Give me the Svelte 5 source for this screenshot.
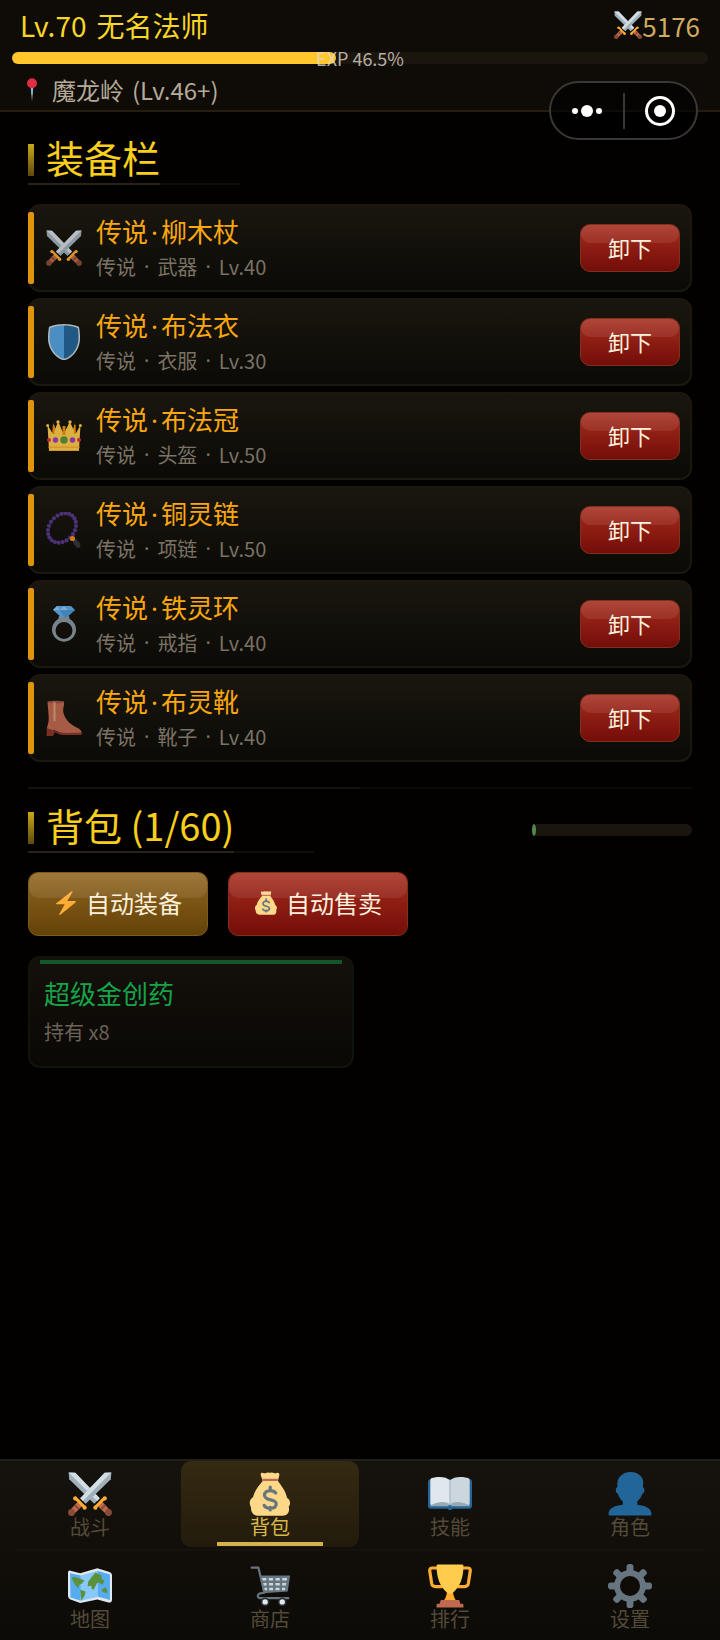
<script>
  const player = { level: 70, name: "无名法师", power: 5176, exp: 46.5 };
  const zone = { name: "魔龙岭", level: 46 };
  const bag = { used: 1, size: 60 };

  let equipment = $state([
    { icon: "swords", name: "柳木杖", slot: "武器", level: 40 },
    { icon: "shield", name: "布法衣", slot: "衣服", level: 30 },
    { icon: "crown", name: "布法冠", slot: "头盔", level: 50 },
    { icon: "beads", name: "铜灵链", slot: "项链", level: 50 },
    { icon: "ring", name: "铁灵环", slot: "戒指", level: 40 },
    { icon: "boot", name: "布灵靴", slot: "靴子", level: 40 },
  ]);

  const items = [{ name: "超级金创药", count: 8 }];

  const tabRows = [
    [
      { icon: "swords", label: "战斗" },
      { icon: "moneybag", label: "背包" },
      { icon: "book", label: "技能" },
      { icon: "person", label: "角色" },
    ],
    [
      { icon: "map", label: "地图" },
      { icon: "cart", label: "商店" },
      { icon: "trophy", label: "排行" },
      { icon: "gear", label: "设置" },
    ],
  ];

  let activeTab = $state("背包");

  const beads = Array.from({ length: 22 }, (_, i) => {
    const a = (i / 22) * Math.PI * 2;
    const x = Math.cos(a) * 16;
    const y = Math.sin(a) * 12.5;
    // tilt the oval towards the tassel
    return { x: 16 + x * 0.64 + y * 0.77, y: 16 - x * 0.77 + y * 0.64 };
  });

  function unequip(item) {
    equipment = equipment.filter((e) => e !== item);
  }
</script>

{#snippet sword()}
  <path fill="#9fb0bb" d="M35.500 .5 30 .7 10 21.500 14.500 26 35 6z" />
  <path fill="#d3dde4" d="M35.500 .5 30 .7 10 21.500 12.200 23.700z" />
  <path fill="#be6a4a" d="m8.300 24 3.700 3.700-6.500 6-3.200-3.200z" />
  <path fill="#8a4b38" d="m6 26.300 3.500 3.500-1.200 1.200-3.500-3.500z" />
  <circle fill="#8a4b38" cx="2.900" cy="33.100" r="2.800" />
  <path
    fill="none"
    stroke="#ffac33"
    stroke-width="2.400"
    stroke-linecap="round"
    d="M6 21.700c1 .3 2 1.300 3.400 2.900s2.800 3 4 4"
  />
  <circle fill="#ffac33" cx="5.900" cy="21.600" r="1.700" />
  <circle fill="#ffac33" cx="13.600" cy="29.200" r="1.700" />
{/snippet}

{#snippet icon(name)}
  <svg class="icon" viewBox="0 0 36 36" aria-hidden="true">
    {#if name === "swords"}
      <g transform="matrix(-1 0 0 1 36 0)">{@render sword()}</g>
      {@render sword()}
    {:else if name === "shield"}
      <path fill="#ccd6dd" d="M33 3s-5-3-15-3S3 3 3 3s-1 5-1 11c0 14 11 22 16 22s16-8 16-22c0-6-1-11-1-11z" />
      <path fill="#269" d="M18 1.500c8.500 0 13.700 2.600 13.700 2.600s.8 4.800.8 9.900c0 12.500-9.700 20.500-14.500 20.500z" />
      <path fill="#55a4e4" d="M18 1.500C9.500 1.500 4.300 4.100 4.300 4.100S3.500 8.900 3.500 14c0 12.500 9.700 20.500 14.500 20.500z" />
    {:else if name === "crown"}
      <path fill="#f4900c" d="m6 19 1-14 5 12 1-12 5 13 5-13 2 12 4-12 1 14z" />
      <path fill="#ffcc4d" d="M3 32 1.500 7 7 16l5-12 5.500 12L24 4l5.500 12L34.500 7 33 32z" />
      <path fill="#f4900c" d="M7 7h1.500v9H7zM16.500 8h3v9h-3zM28 7h1.500v9H28z" />
      <path fill="#ffac33" d="M2.500 28.500h31v1.500h-31zM3 32h30v1H3z" />
      <circle fill="#5c913b" cx="18" cy="22" r="3.700" />
      <circle fill="#9a3fc4" cx="9.500" cy="22" r="2.700" />
      <circle fill="#9a3fc4" cx="26.500" cy="22" r="2.700" />
      <circle fill="#dd2e44" cx="3" cy="22" r="2" />
      <circle fill="#dd2e44" cx="33" cy="22" r="2" />
      <g fill="#ffcc4d">
        <circle cx="1.700" cy="7.500" r="1.500" />
        <circle cx="12" cy="4" r="1.700" />
        <circle cx="24" cy="4" r="1.700" />
        <circle cx="34.300" cy="7.500" r="1.500" />
      </g>
    {:else if name === "beads"}
      {#each beads as bead}
        <circle fill="#553788" cx={bead.x} cy={bead.y} r="2.100" />
      {/each}
      <path fill="#31373d" d="m27 28 3.500-1 4 5-.5 3.500-3 .5-4-5z" />
      <circle fill="#f4900c" cx="26.500" cy="26.500" r="2.600" />
    {:else if name === "ring"}
      <path
        fill="#8899a6"
        fill-rule="evenodd"
        d="M13 10h10l.7 3.100A12 12 0 1 1 12.300 13.100zM18 16a8.500 8.500 0 1 0 0 17 8.500 8.500 0 0 0 0-17z"
      />
      <path fill="#5dadec" d="M11 0h14l4 4-8 7h-6L7 4z" />
      <path fill="#8ccaf7" d="m11 0-4 4h7zM18 0l-4 4h8z" />
      <path fill="#4a98d6" d="m14 4 4 7h3l1-7zM22 4h7l-8 7z" />
    {:else if name === "boot"}
      <path fill="#c1694f" d="M1.500 2c0-1 16-1 16.500 0 .5 3-1.500 7-.5 11 1.500 6 6 11 13 14.500 3.500 1.500 5.500 3 5 6l-18 .5L8 30l-7 1c-.7-3 .7-5 1.500-9 .8-5-.7-14-1-20z" />
      <path fill="#a0513f" d="M2 2.500c3 1 12.500 1 16 0V1.500c-4-1-13-1-16 0z" />
      <path fill="#d99e82" d="M7.500 2h2v19h-2z" />
      <path fill="#8a352c" d="M1 28c3 2 6.500 1.500 10 3.500 4 2 12 1.500 24.500 1v2.500H17c-3 0-5-1-8-3L7 36H.5z" />
    {:else if name === "zap"}
      <path fill="#ffac33" d="M32.900 15.600A1 1 0 0 0 32 15H19.900L27.800 1.600A1 1 0 0 0 26.500.2l-23 18A1 1 0 0 0 4.100 20h12L8.200 34.300a1 1 0 0 0 1.400 1.400l23-19a1 1 0 0 0 .3-1.100z" />
    {:else if name === "moneybag"}
      <path
        fill="#fdd888"
        d="M31.900 21.100C30.900 15.500 27 11 24.500 7.400L25.600 2.600C25.900 1 24.700.1 23.300.8 22 1.500 20.500 0 19.300.4 18.300.8 17.600.8 16.500.4 15.200 0 14 1.500 12.600.8 11 .1 10 1.200 10.500 2.700L12 7.400C9 11 5.200 15.500 4.200 20.500 1 22.500.7 26 2.500 29 2.200 32.500 4.500 36 8.500 35.700H28c4 .2 6.500-3 5.300-7 2-3 1.200-6-1.400-7.600z"
      />
      <path fill="#bf6952" d="M11.500 5.600h13.200L24.300 7.400H12.100z" />
      <path
        fill="none"
        stroke="#67757f"
        stroke-width="2.600"
        stroke-linecap="round"
        d="M18.200 12.300v3M18.200 29v2M22.700 17.200c-1-1.400-2.700-2-4.500-2-2.700 0-4.700 1.500-4.700 3.800 0 5 9.600 2.700 9.600 7 0 2.400-2 3.800-4.900 3.800-2.200 0-4-.9-5-2.500"
      />
    {:else if name === "book"}
      <path fill="#269" d="M0 8q0-2 2-2h32q2 0 2 2v20q0 2-2 2H20q0 1-2 1t-2-1H2q-2 0-2-2z" />
      <path fill="#99aab5" d="M2 6.500h32V28H20l-2 1-2-1H2z" />
      <path fill="#e1e8ed" d="M3 5c5-1.500 12-1.500 15 2v19.500C14 23.500 8 24.500 3.500 26.500 2.500 27 2 26.500 2 25.500V6z" />
      <path fill="#ccd6dd" d="M33 5c-5-1.500-12-1.500-15 2v19.500c4-3 10-2 14.500 0 1 .5 1.500 0 1.500-1V6z" />
      <path fill="#aab8c2" d="M17.500 6.500h1V27h-1z" />
      <circle fill="#226699" cx="18" cy="28.500" r="1.600" />
    {:else if name === "person"}
      <path
        fill="#269"
        d="M24 26.800v-2.700c1.900-1.600 3.400-4 4.200-6.500 1 0 1.600-1.200 1.600-2.600s-.5-2.500-1.300-2.700C30.500 5 25.500 0 18.500 0S6.500 5 7.800 12.300C6.900 12.500 6.400 13.600 6.400 15s.7 2.600 1.600 2.600c.8 2.500 2.200 4.900 4.100 6.500v2.700C5 27.500.5 30 .5 34v1q0 .5 1 .5h33q1 0 1-.5v-1c0-4-4.500-6.500-11.500-7.200z"
      />
    {:else if name === "map"}
      <path fill="#e1e8ed" d="M0 7q0-2 2-1.500l8 2 14-4 10 3q2 .6 2 2.500v20q0 3-3 2.500l-9-2.500-14 3-8-3q-2-.7-2-3z" />
      <path fill="#55acee" d="m1.700 7.500 8.800 2V30L2 27.500zM24 5.500l10.300 3v21L24 26.500z" />
      <path fill="#88c9f9" d="m10.500 9.500 13.500-4v21.500L10.500 30z" />
      <path
        fill="#5c913b"
        d="M3 11.500 5 10.500l5 1.500 3.500 1.500-2 2.500-2.500 1-.5 3-3-3.500zM10 21l4.500 1.500-1 3.500-2.500 4-.5-4.500zM16 18.500l.5-4 3-4 3-3.500 5 2.500v2.500l2.500 2-2 3-3-2-1.500 1-2.500 5-1.500-.5-.5-3zM27.500 21l3-2 1.500 2v3l-3.500-1z"
      />
    {:else if name === "cart"}
      <path
        fill="none"
        stroke="#66757f"
        stroke-width="1.800"
        stroke-linejoin="round"
        stroke-linecap="round"
        d="M3 3h5.500l5 20.500-3.500.5c-2.700 1-2.700 4 .5 4h22.500"
      />
      <path fill="#66757f" d="M9.500 9.500h25L32.500 22.500 12.500 24z" />
      <g fill="#ccd6dd">
        <path d="M11.500 11.500h3.500v2h-3zM17 11.500h3.500v2H17zM22.500 11.500H26v2h-3.500zM28 11.500h4l-.4 2H28z" />
        <path d="M12.500 15.500h2.700v2h-2.300zM17.200 15.500h3.300v2h-3.300zM22.500 15.500H26v2h-3.500zM28 15.500h3.300l-.4 2H28z" />
        <path d="M13.300 19.500h2.300v2h-1.800zM17.400 19.500h3.100v2h-3.100zM22.500 19.500h3.300v2h-3.300zM27.800 19.500h2.700l-.4 2h-2.300z" />
      </g>
      <circle fill="#292f33" cx="14" cy="31" r="3.500" />
      <circle fill="#292f33" cx="28" cy="31" r="3.500" />
      <circle fill="#e1e8ed" cx="14" cy="31" r="2.200" />
      <circle fill="#e1e8ed" cx="28" cy="31" r="2.200" />
    {:else if name === "trophy"}
      <path
        fill="none"
        stroke="#ffac33"
        stroke-width="2.600"
        d="M9 3.300H3.500Q1.300 3.300 1.400 5.500L3 16q.5 2.500 3 2.500h6M27 3.300h5.500q2.200 0 2.100 2.200L33 16q-.5 2.500-3 2.500h-6"
      />
      <path fill="#ffac33" d="M15.500 22h5c0 4 1.500 6 2.500 8H13c1-2 2.500-4 2.500-8z" />
      <path fill="#ffcc4d" d="M7 1.500Q7 .5 8.500.5h19q1.500 0 1.500 1c0 10-3 17-8 21.500-2 1.800-4 1.800-6 0C10 18.500 7 11.500 7 1.500z" />
      <path fill="#c1694f" d="M10.500 29.500h15l1 3H28q1 0 1 1v2H7v-2q0-1 1-1h1.500z" />
    {:else if name === "gear"}
      <g fill="#66757f">
        {#each [0, 45, 90, 135] as angle}
          <rect x="15.200" y="0" width="5.600" height="36" rx="2.300" transform="rotate({angle} 18 18)" />
        {/each}
        <circle cx="18" cy="18" r="13" />
      </g>
      <circle class="gear-hole" cx="18" cy="18" r="8.200" />
    {:else if name === "pin"}
      <path fill="#99aab5" d="m16 12 2 24 2-24z" />
      <path fill="#88c9f9" fill-opacity=".5" d="m16 12 1 14h2l1-14z" />
      <circle fill="#dd2e44" cx="18" cy="8" r="7.500" />
    {/if}
  </svg>
{/snippet}

<div class="page">
  <header>
    <div class="player">
      <div class="player-name"><span>Lv.{player.level}</span><span>{player.name}</span></div>
      <span class="power">{@render icon("swords")}{player.power}</span>
    </div>
    <div class="bar exp">
      <div class="fill" style="width: {player.exp}%"></div>
      <span class="exp-text">EXP {player.exp}%</span>
    </div>
    <div class="zone">
      {@render icon("pin")}
      <span>{zone.name}</span>
      <span>(Lv.{zone.level}+)</span>
    </div>
  </header>

  <div class="capsule">
    <button aria-label="更多">
      <svg width="32" height="12" viewBox="0 0 32 12" fill="#fff">
        <circle cx="4" cy="6" r="3" />
        <circle cx="16" cy="6" r="6" />
        <circle cx="28" cy="6" r="3" />
      </svg>
    </button>
    <span class="capsule-line"></span>
    <button aria-label="关闭">
      <svg width="32" height="32" viewBox="0 0 32 32">
        <circle cx="16" cy="16" r="13.500" fill="none" stroke="#fff" stroke-width="3" />
        <circle cx="16" cy="16" r="6" fill="#fff" />
      </svg>
    </button>
  </div>

  <main>
    <h2><span class="title">装备栏</span></h2>

    <ul class="equipment">
      {#each equipment as item (item.slot)}
        <li class="equip">
          {@render icon(item.icon)}
          <div class="info">
            <div class="equip-name">传说<span class="dot">·</span>{item.name}</div>
            <div class="meta">
              <span>传说</span>
              <span class="dot">·</span>
              <span>{item.slot}</span>
              <span class="dot">·</span>
              <span>Lv.{item.level}</span>
            </div>
          </div>
          <button class="btn red small" onclick={() => unequip(item)}>卸下</button>
        </li>
      {/each}
    </ul>

    <div class="divider"></div>

    <div class="bag-head">
      <h2><span class="title">背包 ({bag.used}/{bag.size})</span></h2>
      <div class="bar capacity">
        <div class="fill" style="width: {(bag.used / bag.size) * 100}%"></div>
      </div>
    </div>

    <div class="actions">
      <button class="btn gold">{@render icon("zap")}自动装备</button>
      <button class="btn red">{@render icon("moneybag")}自动售卖</button>
    </div>

    <div class="items">
      {#each items as item}
        <div class="item">
          <div class="item-name">{item.name}</div>
          <div class="item-count">持有 x{item.count}</div>
        </div>
      {/each}
    </div>
  </main>

  <nav>
    {#each tabRows as row, i}
      {#if i > 0}
        <div class="nav-line"></div>
      {/if}
      <div class="tabs">
        {#each row as tab}
          <button
            class="tab"
            class:active={activeTab === tab.label}
            onclick={() => (activeTab = tab.label)}
          >
            {@render icon(tab.icon)}
            <span>{tab.label}</span>
          </button>
        {/each}
      </div>
    {/each}
  </nav>
</div>

<style>
  :global(body) {
    margin: 0;
    background: #020100;
  }

  .page {
    position: relative;
    display: flex;
    flex-direction: column;
    min-height: 100vh;
    font-family: "Noto Sans CJK SC", sans-serif;
    color: #b5aa98;
  }

  button {
    margin: 0;
    padding: 0;
    border: none;
    background: none;
    font-family: inherit;
    color: inherit;
    cursor: pointer;
  }

  .icon {
    display: block;
    flex: none;
    width: 36px;
    height: 36px;
  }

  .gear-hole {
    fill: #0f0c08;
  }

  header {
    background: #0f0b06;
    border-bottom: 2px solid #251d10;
  }

  .player {
    display: flex;
    align-items: center;
    justify-content: space-between;
    height: 50px;
    padding: 0 20px 2px;
  }

  .player-name {
    display: flex;
    gap: 10px;
    font-size: 28px;
    color: #f8d626;
  }

  .power {
    display: flex;
    align-items: center;
    font-size: 26px;
    color: #d0ab60;
  }

  .power .icon {
    width: 28px;
    height: 28px;
  }

  .bar {
    height: 12px;
    border-radius: 6px;
    background: #1a150d;
  }

  .fill {
    height: 100%;
    border-radius: 6px;
    background: #ffc72c;
  }

  .exp {
    position: relative;
    margin: 0 12px;
  }

  .exp-text {
    position: absolute;
    inset: 0;
    font-size: 18px;
    line-height: 12px;
    text-align: center;
    color: rgba(225, 218, 208, 0.8);
  }

  .zone {
    display: flex;
    align-items: center;
    gap: 8px;
    padding: 8px 20px 2px;
    font-size: 24px;
    line-height: 36px;
  }

  .zone .icon {
    width: 24px;
    height: 24px;
  }

  .capsule {
    position: absolute;
    top: 81px;
    right: 22px;
    display: flex;
    align-items: center;
    box-sizing: border-box;
    width: 149px;
    height: 59px;
    border: 2px solid #3a3835;
    border-radius: 30px;
    background: rgba(0, 0, 0, 0.6);
  }

  .capsule button {
    display: flex;
    flex: 1;
    align-items: center;
    justify-content: center;
    height: 100%;
  }

  .capsule-line {
    width: 2px;
    height: 36px;
    background: #3a3835;
  }

  main {
    flex: 1;
    padding: 25px 28px;
  }

  h2 {
    display: flex;
    flex-direction: column;
    width: fit-content;
    margin: 0 0 19px;
    font-size: 38px;
    font-weight: 400;
    line-height: 40px;
    color: #f8cf1c;
  }

  .title {
    display: flex;
    align-items: center;
    gap: 12px;
    padding: 0 80px 6px 0;
  }

  .title::before {
    content: "";
    width: 6px;
    height: 32px;
    margin-top: 6px;
    background: linear-gradient(#c9a81a, #5f4810);
  }

  h2::after {
    content: "";
    height: 2px;
    background: linear-gradient(90deg, #2a2214 calc(100% - 80px), #110e08 0);
  }

  .equipment {
    display: flex;
    flex-direction: column;
    gap: 6px;
    margin: 0;
    padding: 0;
    list-style: none;
  }

  .equip {
    position: relative;
    display: flex;
    align-items: center;
    gap: 14px;
    box-sizing: border-box;
    height: 88px;
    padding: 0 10px 0 16px;
    border: 2px solid #1c180e;
    border-radius: 12px;
    background: linear-gradient(#1a160f, #0b0a06);
  }

  .equip::before {
    content: "";
    position: absolute;
    top: 6px;
    bottom: 6px;
    left: -2px;
    width: 6px;
    border-radius: 2px;
    background: #df950b;
  }

  .equip .icon {
    opacity: 0.85;
  }

  .info {
    flex: 1;
  }

  .equip-name {
    margin-bottom: 4px;
    font-size: 26px;
    line-height: 32px;
    color: #fba70f;
  }

  /* the CJK face has a full-width middle dot */
  .dot {
    font-family: "Noto Sans", sans-serif;
    text-align: center;
  }

  .equip-name .dot {
    display: inline-block;
    width: 13px;
  }

  .meta {
    display: flex;
    gap: 8px;
    font-size: 20px;
    line-height: 30px;
    color: #7a7264;
  }

  .btn {
    position: relative;
    display: flex;
    align-items: center;
    justify-content: center;
    gap: 8px;
    box-sizing: border-box;
    width: 180px;
    height: 64px;
    padding-bottom: 3px;
    border: 1px solid;
    border-radius: 10px;
    font-size: 24px;
    color: #fdf0dc;
  }

  .btn::before {
    content: "";
    position: absolute;
    inset: 0 0 60%;
    border-radius: 10px;
    background: linear-gradient(rgba(255, 255, 255, 0.12), rgba(255, 255, 255, 0.08));
  }

  .btn .icon {
    width: 24px;
    height: 24px;
  }

  .btn.small {
    width: 100px;
    height: 48px;
    font-size: 22px;
  }

  .red {
    border-color: #82301e;
    background: linear-gradient(#a52c1e, #740d08);
  }

  .gold {
    border-color: #7d5a1e;
    background: linear-gradient(#90651f, #634208);
  }

  .divider {
    height: 2px;
    margin: 25px 0 16px;
    background: linear-gradient(90deg, #17130c 50%, #0b0906 0);
  }

  .bag-head {
    display: flex;
    align-items: flex-start;
    justify-content: space-between;
  }

  .capacity {
    width: 160px;
    margin-top: 19px;
  }

  .capacity .fill {
    min-width: 4px;
    border-radius: 50%;
    background: #4f8a4c;
  }

  .actions {
    display: flex;
    gap: 20px;
    margin-bottom: 20px;
  }

  .items {
    display: grid;
    grid-template-columns: 1fr 1fr;
    gap: 12px;
  }

  .item {
    position: relative;
    box-sizing: border-box;
    height: 112px;
    padding: 16px 14px;
    border: 2px solid #11140c;
    border-radius: 12px;
    background: linear-gradient(#14100b, #0a0805);
  }

  .item::before {
    content: "";
    position: absolute;
    top: 2px;
    left: 10px;
    right: 10px;
    height: 4px;
    background: #14562b;
  }

  .item-name {
    margin-bottom: 2px;
    font-size: 26px;
    line-height: 38px;
    color: #17a348;
  }

  .item-count {
    font-size: 20px;
    line-height: 36px;
    color: #6a6256;
  }

  nav {
    display: flex;
    flex-direction: column;
    gap: 2px;
    padding-bottom: 1px;
    border-top: 2px solid #231f1a;
    background: linear-gradient(#16120d, #0d0b07);
  }

  .nav-line {
    height: 2px;
    margin: 0 16px;
    background: #16130e;
  }

  .tabs {
    display: grid;
    grid-template-columns: repeat(4, 1fr);
  }

  .tab {
    position: relative;
    display: flex;
    flex-direction: column;
    align-items: center;
    height: 86px;
    margin: 0 1px;
    padding-top: 11px;
    border-radius: 10px;
    font-size: 20px;
    line-height: 22px;
    color: #544a38;
  }

  .tab .icon {
    width: 44px;
    height: 44px;
  }

  .tab.active {
    background: linear-gradient(#352a12, #221b0c);
    color: #d9b648;
  }

  .tab.active::after {
    content: "";
    position: absolute;
    bottom: 1px;
    left: 20%;
    right: 20%;
    height: 4px;
    background: #d6b04c;
  }
</style>
